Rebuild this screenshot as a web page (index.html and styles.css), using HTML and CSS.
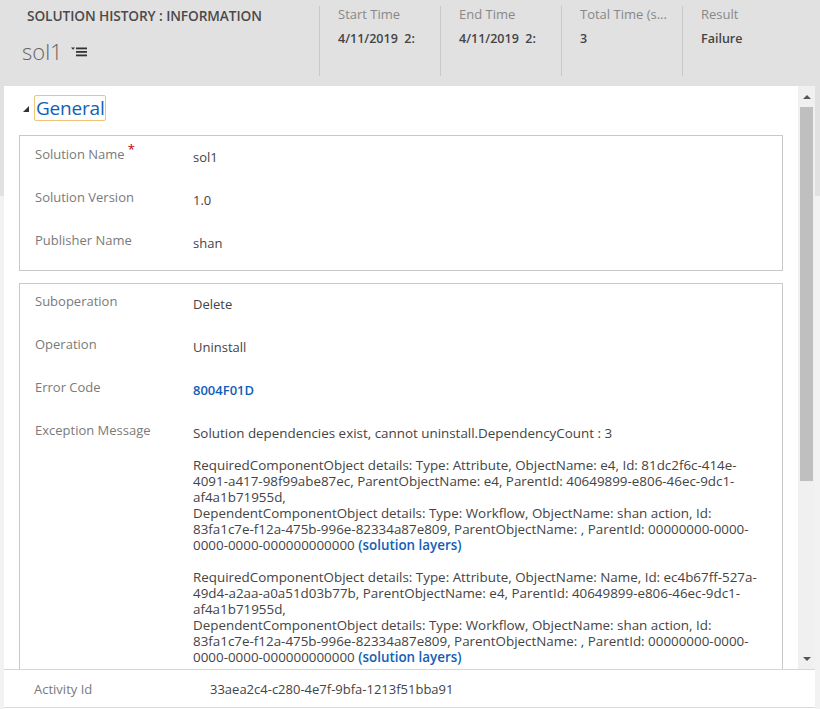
FILE: index.html
```html
<!DOCTYPE html>
<html>
<head>
<meta charset="utf-8">
<link rel="stylesheet" href="styles.css">
</head>
<body>
<header class="hdr">
  <div class="title-block">
    <div class="entity">SOLUTION HISTORY : INFORMATION</div>
    <div class="record">
      <span class="record-name">sol1</span>
      <svg class="form-icon" width="17" height="10" viewBox="0 0 17 10">
        <polygon points="0,0.5 4,0.5 2,2.8" fill="#333"/>
        <rect x="5" y="0.5" width="11" height="1.8" fill="#333"/>
        <rect x="5" y="4" width="11" height="1.8" fill="#333"/>
        <rect x="5" y="7.5" width="11" height="1.8" fill="#333"/>
      </svg>
    </div>
  </div>
  <div class="hfield">
    <div class="hlabel">Start Time</div>
    <div class="hvalue">4/11/2019&nbsp;&nbsp;2:</div>
  </div>
  <div class="hfield">
    <div class="hlabel">End Time</div>
    <div class="hvalue">4/11/2019&nbsp;&nbsp;2:</div>
  </div>
  <div class="hfield">
    <div class="hlabel">Total Time (s...</div>
    <div class="hvalue">3</div>
  </div>
  <div class="hfield">
    <div class="hlabel">Result</div>
    <div class="hvalue">Failure</div>
  </div>
</header>

<main class="panel">
  <div class="scroll">
    <div class="content">
      <div class="section-head">
        <span class="caret"></span>
        <span class="section-title">General</span>
      </div>

      <div class="box box-general">
        <div class="row">
          <div class="label">Solution Name<span class="req">*</span></div>
          <div class="value">sol1</div>
        </div>
        <div class="row">
          <div class="label">Solution Version</div>
          <div class="value">1.0</div>
        </div>
        <div class="row">
          <div class="label">Publisher Name</div>
          <div class="value">shan</div>
        </div>
      </div>

      <div class="box box-detail">
        <div class="row">
          <div class="label">Suboperation</div>
          <div class="value">Delete</div>
        </div>
        <div class="row">
          <div class="label">Operation</div>
          <div class="value">Uninstall</div>
        </div>
        <div class="row">
          <div class="label">Error Code</div>
          <div class="value link">8004F01D</div>
        </div>
        <div class="row">
          <div class="label">Exception Message</div>
          <div class="value message">
            <p>Solution dependencies exist, cannot uninstall.DependencyCount : 3</p>
            <p>RequiredComponentObject details: Type: Attribute, ObjectName: e4, Id: 81dc2f6c-414e-<br>4091-a417-98f99abe87ec, ParentObjectName: e4, ParentId: 40649899-e806-46ec-9dc1-<br>af4a1b71955d,<br>DependentComponentObject details: Type: Workflow, ObjectName: shan action, Id:<br>83fa1c7e-f12a-475b-996e-82334a87e809, ParentObjectName: , ParentId: 00000000-0000-<br>0000-0000-000000000000 <span class="link">(solution layers)</span></p>
            <p>RequiredComponentObject details: Type: Attribute, ObjectName: Name, Id: ec4b67ff-527a-<br>49d4-a2aa-a0a51d03b77b, ParentObjectName: e4, ParentId: 40649899-e806-46ec-9dc1-<br>af4a1b71955d,<br>DependentComponentObject details: Type: Workflow, ObjectName: shan action, Id:<br>83fa1c7e-f12a-475b-996e-82334a87e809, ParentObjectName: , ParentId: 00000000-0000-<br>0000-0000-000000000000 <span class="link">(solution layers)</span></p>
          </div>
        </div>
      </div>
    </div>
    <div class="scrollbar">
      <div class="arrow arrow-up"></div>
      <div class="track"><div class="thumb"></div></div>
      <div class="arrow arrow-down"></div>
    </div>
  </div>
  <div class="footer">
    <div class="flabel">Activity Id</div>
    <div class="fvalue">33aea2c4-c280-4e7f-9bfa-1213f51bba91</div>
  </div>
</main>
</body>
</html>
```

FILE: styles.css
```css
* { box-sizing: border-box; }
html, body { margin: 0; padding: 0; }
body {
  width: 820px;
  height: 709px;
  overflow: hidden;
  font-family: "Open Sans", "Noto Sans", sans-serif;
  font-size: 13px;
  color: #444;
  background: linear-gradient(#e1e1e1 0, #e1e1e1 196px, #f2f2f2 196px);
}

/* header */
.hdr {
  display: flex;
  height: 86px;
}
.title-block {
  width: 319px;
  padding-left: 27px;
  padding-top: 6px;
}
.entity {
  font-size: 13.7px;
  font-weight: 600;
  line-height: 20px;
  color: #4a4a4a;
  letter-spacing: -0.1px;
}
.record {
  display: flex;
  align-items: center;
  margin-top: 12px;
  margin-left: -5px;
  height: 26px;
}
.record-name {
  font-size: 22px;
  font-weight: 300;
  color: #666;
  line-height: 26px;
}
.form-icon { margin-left: 8px; margin-top: 2px; }

.hfield {
  width: 121px;
  height: 70px;
  margin-top: 6px;
  border-left: 1px solid #c9c9c9;
  padding-left: 18px;
  white-space: nowrap;
  overflow: hidden;
}
.hlabel {
  font-size: 13px;
  line-height: 18px;
  margin-top: -1px;
  color: #888;
}
.hvalue {
  font-size: 12.5px;
  font-weight: 600;
  line-height: 18px;
  margin-top: 7px;
  color: #444;
}

/* panel */
.panel {
  margin-left: 4px;
  width: 811px;
  height: 623px;
  background: #fff;
  display: flex;
  flex-direction: column;
}
.scroll {
  display: flex;
  height: 584px;
  border-bottom: 1px solid #d6d6d6;
}
.content {
  flex: 1;
  overflow: hidden;
  padding-left: 15px;
  padding-right: 15px;
}
.section-head {
  display: flex;
  align-items: center;
  height: 26px;
  margin-top: 9px;
  margin-left: 4px;
}
.caret {
  width: 0;
  height: 0;
  border-left: 6px solid transparent;
  border-bottom: 6px solid #333;
  margin-right: 5px;
  margin-top: 2px;
}
.section-title {
  font-size: 19px;
  line-height: 24px;
  color: #1160b7;
  border: 1px solid #f0c57a;
  border-radius: 2px;
  padding: 0 0 0 1px;
  height: 26px;
  letter-spacing: -0.2px;
}

.box {
  border: 1px solid #c8c8c8;
  margin-top: 14px;
  padding: 8px 0 0 15px;
}
.box-general { height: 136px; }
.box-detail { margin-top: 12px; padding-top: 7px; height: 400px; }
.row {
  display: flex;
  min-height: 40px;
  margin-bottom: 3px;
}
.label {
  width: 158px;
  flex: none;
  line-height: 20px;
  color: #7a7a7a;
  white-space: nowrap;
}
.req {
  color: #b00;
  font-size: 13px;
  position: relative;
  top: -5px;
  margin-left: 3px;
}
.value {
  padding-top: 3px;
  line-height: 20px;
  color: #444;
  white-space: nowrap;
}
.link { color: #1160b7; font-weight: 600; }
.message { font-size: 13.4px; line-height: 16px; padding-top: 5px; }
.message p { margin: 0 0 16px 0; }

/* scrollbar */
.scrollbar {
  width: 17px;
  flex: none;
  background: #f0f0f0;
  display: flex;
  flex-direction: column;
}
.arrow {
  height: 21px;
  display: flex;
  justify-content: center;
  align-items: center;
}
.arrow-up::before {
  content: "";
  border-left: 4px solid transparent;
  border-right: 4px solid transparent;
  border-bottom: 4px solid #555;
}
.arrow-down::before {
  content: "";
  border-left: 4px solid transparent;
  border-right: 4px solid transparent;
  border-top: 4px solid #555;
}
.track { flex: 1; padding: 0 2px; }
.thumb {
  height: 374px;
  background: #bfbfbf;
}

/* footer */
.footer {
  display: flex;
  align-items: center;
  height: 38px;
  border-bottom: 1px solid #f3d99a;
  padding-left: 30px;
}
.flabel { width: 176px; color: #7a7a7a; }
.fvalue { color: #444; }
```
